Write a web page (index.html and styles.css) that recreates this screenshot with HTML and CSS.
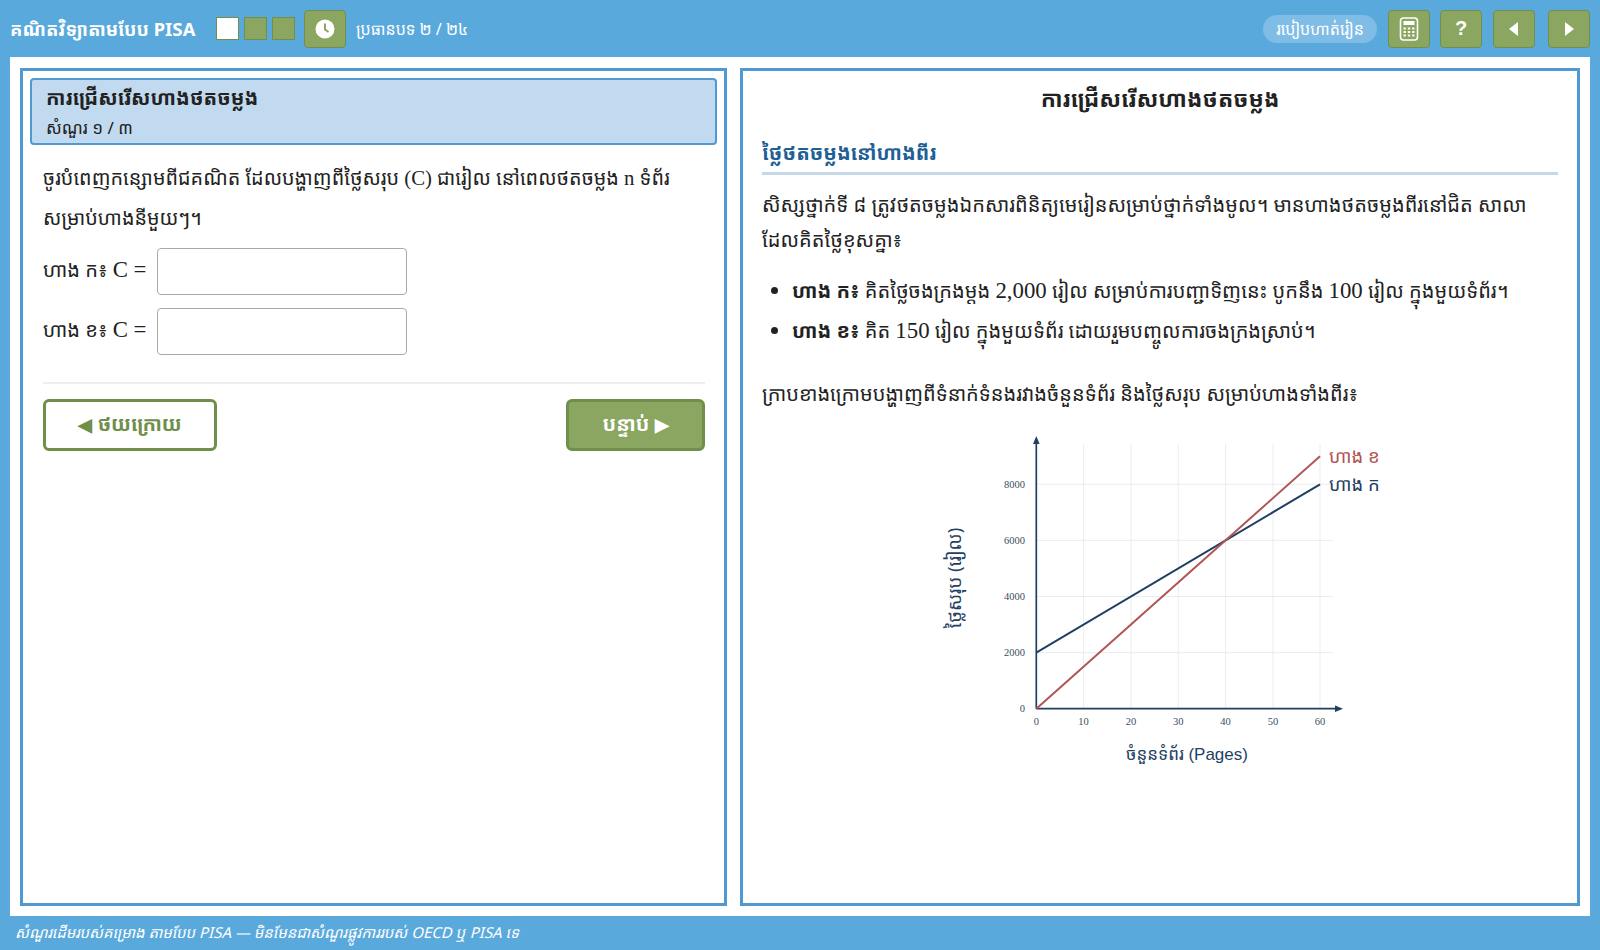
FILE: index.html
```html
<!DOCTYPE html>
<html lang="km">
<head>
<meta charset="utf-8">
<title>គណិតវិទ្យាតាមបែប PISA</title>
<link rel="stylesheet" href="styles.css">
</head>
<body>
<div class="app">
  <header class="topbar">
    <div class="brand">គណិតវិទ្យាតាមបែប PISA</div>
    <div class="steps">
      <span class="step step-on"></span>
      <span class="step"></span>
      <span class="step"></span>
    </div>
    <button class="tool tool-clock" aria-label="clock">
      <svg width="22" height="22" viewBox="0 0 22 22"><circle cx="11" cy="11" r="9.5" fill="#fff"/><path d="M11 5.5V11.5L14.5 14" fill="none" stroke="#8aa661" stroke-width="2"/></svg>
    </button>
    <div class="topic">ប្រធានបទ ២ / ២៤</div>
    <div class="spacer"></div>
    <div class="howto">របៀបហាត់រៀន</div>
    <button class="tool" aria-label="calculator">
      <svg width="20" height="26" viewBox="0 0 20 26"><rect x="1.5" y="2" width="17" height="22" rx="3" fill="none" stroke="#fff" stroke-width="1.6"/><rect x="4.5" y="5" width="11" height="4" fill="#fff"/><g fill="#fff"><rect x="4.5" y="11.5" width="2.4" height="2"/><rect x="8.8" y="11.5" width="2.4" height="2"/><rect x="13.1" y="11.5" width="2.4" height="2"/><rect x="4.5" y="15" width="2.4" height="2"/><rect x="8.8" y="15" width="2.4" height="2"/><rect x="13.1" y="15" width="2.4" height="2"/><rect x="4.5" y="18.5" width="2.4" height="2"/><rect x="8.8" y="18.5" width="2.4" height="2"/><rect x="13.1" y="18.5" width="2.4" height="2"/></g></svg>
    </button>
    <button class="tool tool-q" aria-label="help">?</button>
    <button class="tool tool-prev" aria-label="previous">
      <svg width="10" height="14" viewBox="0 0 10 14"><path d="M9 0V14L0 7Z" fill="#fff"/></svg>
    </button>
    <button class="tool tool-next" aria-label="next">
      <svg width="10" height="14" viewBox="0 0 10 14"><path d="M1 0V14L10 7Z" fill="#fff"/></svg>
    </button>
  </header>

  <main class="stage">
    <section class="panel panel-left">
      <div class="qhead">
        <div class="qtitle">ការជ្រើសរើសហាងថតចម្លង</div>
        <div class="qsub">សំណួរ ១ / ៣</div>
      </div>
      <div class="qbody">
        <p class="prompt">ចូរបំពេញកន្សោមពីជគណិត ដែលបង្ហាញពីថ្លៃសរុប <span class="lat lat-tight">(C)</span> ជារៀល នៅពេលថតចម្លង <span class="lat lat-tight">n</span> ទំព័រ សម្រាប់ហាងនីមួយៗ។</p>
        <div class="field"><label>ហាង ក៖ <span class="lat">C =</span></label><input type="text"></div>
        <div class="field"><label>ហាង ខ៖ <span class="lat">C =</span></label><input type="text"></div>
        <div class="actions">
          <button class="btn btn-back"><span class="arr">◀</span> ថយក្រោយ</button>
          <button class="btn btn-next">បន្ទាប់ <span class="arr">▶</span></button>
        </div>
      </div>
    </section>

    <section class="panel panel-right">
      <h1 class="title">ការជ្រើសរើសហាងថតចម្លង</h1>
      <h2 class="subtitle">ថ្លៃថតចម្លងនៅហាងពីរ</h2>
      <p class="para">សិស្សថ្នាក់ទី ៨ ត្រូវថតចម្លងឯកសារពិនិត្យមេរៀនសម្រាប់ថ្នាក់ទាំងមូល។ មានហាងថតចម្លងពីរនៅជិត សាលា ដែលគិតថ្លៃខុសគ្នា៖</p>
      <ul class="list">
        <li><b>ហាង ក៖</b> គិតថ្លៃចងក្រងម្តង <span class="lat">2,000</span> រៀល សម្រាប់ការបញ្ជាទិញនេះ បូកនឹង <span class="lat">100</span> រៀល ក្នុងមួយទំព័រ។</li>
        <li><b>ហាង ខ៖</b> គិត <span class="lat">150</span> រៀល ក្នុងមួយទំព័រ ដោយរួមបញ្ចូលការចងក្រងស្រាប់។</li>
      </ul>
      <p class="para para-chart">ក្រាបខាងក្រោមបង្ហាញពីទំនាក់ទំនងរវាងចំនួនទំព័រ និងថ្លៃសរុប សម្រាប់ហាងទាំងពីរ៖</p>
      <svg class="chart" width="480" height="360" viewBox="0 0 480 360">
        <g stroke="#e4e7ea" stroke-width="0.8" fill="none">
          <path d="M163.6 24V288.7M211 24V288.7M258.3 24V288.7M305.6 24V288.7M353 24V288.7M400 24V288.7"/>
          <path d="M116.3 64.3H413M116.3 120.4H413M116.3 176.5H413M116.3 232.6H413"/>
        </g>
        <path d="M116.3 288.7H418M116.3 288.7V22" fill="none" stroke="#1f3f63" stroke-width="1.7"/>
        <path d="M116.3 16L119.6 24H113Z" fill="#1f3f63"/>
        <path d="M423 288.7L415 285.5V292Z" fill="#1f3f63"/>
        <path d="M116.3 232.7L400 64.3" fill="none" stroke="#1f3f63" stroke-width="2"/>
        <path d="M116.3 288.7L400 36.3" fill="none" stroke="#b05555" stroke-width="2"/>
        <g class="tick tick-y">
          <text x="105" y="67.5">8000</text><text x="105" y="123.5">6000</text><text x="105" y="179.5">4000</text><text x="105" y="235.5">2000</text><text x="105" y="292">0</text>
        </g>
        <g class="tick tick-x">
          <text x="116.3" y="304.5">0</text><text x="163.6" y="304.5">10</text><text x="211" y="304.5">20</text><text x="258.3" y="304.5">30</text><text x="305.6" y="304.5">40</text><text x="353" y="304.5">50</text><text x="400" y="304.5">60</text>
        </g>
        <text class="lab lab-red" x="409" y="43">ហាង ខ</text>
        <text class="lab lab-blue" x="409" y="71">ហាង ក</text>
        <text class="axis-x" x="267" y="340">ចំនួនទំព័រ <tspan class="axis-lat">(Pages)</tspan></text>
        <text class="axis-y" transform="translate(41 158) rotate(-90)">ថ្លៃសរុប (រៀល)</text>
      </svg>
    </section>
  </main>

  <footer class="foot">សំណួរដើមរបស់គម្រោង តាមបែប PISA — មិនមែនជាសំណួរផ្លូវការរបស់ OECD ឬ PISA ទេ</footer>
</div>
</body>
</html>
```
FILE: styles.css
```css
* { box-sizing: border-box; }
html, body { margin: 0; height: 100%; }
body {
  font-family: "Noto Sans Khmer", "Noto Sans", "Liberation Sans", sans-serif;
  color: #222;
  background: #5aa9dd;
}
.app { width: 1600px; height: 950px; display: flex; flex-direction: column; }
.lat { font-family: "Liberation Serif", serif; font-size: 1.14em; }
.lat-tight { font-size: 1.05em; }

.topbar {
  height: 57px;
  display: flex;
  align-items: center;
  padding: 0 10px;
  color: #fff;
}
.brand { font-size: 18.3px; font-weight: 700; width: 206px; white-space: nowrap; }
.steps { display: flex; gap: 5px; width: 88px; }
.step { width: 23px; height: 23px; background: #8aa661; border: 1px solid #6f8f4a; }
.step-on { background: #fff; }
.tool {
  width: 42px; height: 38px; padding: 0;
  display: flex; align-items: center; justify-content: center;
  background: #8aa661; border: 1px solid #6f8f4a; border-radius: 4px;
  color: #fff; font: 700 20px "Liberation Sans", sans-serif;
}
.topic { margin-left: 10px; font-size: 16px; }
.spacer { flex: 1; }
.howto {
  width: 114px; height: 28px; margin-right: 11px;
  border-radius: 14px; background: #7fbce6;
  display: flex; align-items: center; justify-content: center;
  font-size: 16px; white-space: nowrap;
}
.tool-q { margin-left: 10px; }
.tool-prev { margin-left: 11px; }
.tool-next { margin-left: 13px; }

.stage {
  height: 859px;
  margin: 0 10px;
  background: #fff;
  display: flex;
  gap: 13px;
  padding: 11px 10px 10px;
}
.panel { border: 3px solid #4f9ad0; background: #fff; }
.panel-left { width: 707px; padding: 7px; }
.panel-right { flex: 1; padding: 0 19px; }

.qhead {
  height: 67px;
  background: #c1daf0;
  border: 2px solid #4f9ad0;
  border-radius: 4px;
  padding: 2px 14px;
}
.qtitle { font-size: 20px; font-weight: 700; line-height: 32px; }
.qsub { font-size: 17px; line-height: 27px; }
.qbody { padding: 13px 12px 14px 13px; }
.prompt { margin: 0; font-size: 19.8px; line-height: 40px; }
.field { display: flex; align-items: center; gap: 12px; margin-top: 13px; }
.prompt + .field { margin-top: 10px; }
.field label { font-size: 20px; width: 102px; white-space: nowrap; padding-bottom: 4px; }
.field input { width: 250px; height: 47px; border: 1px solid #aaa; border-radius: 4px; background: #fff; }
.actions {
  display: flex; justify-content: space-between;
  margin-top: 27px; padding-top: 15px;
  border-top: 2px solid #eee;
}
.btn {
  height: 52px; padding: 0 0 3px; border: 3px solid #6f8f4a; border-radius: 6px;
  font-family: inherit; font-size: 20px; font-weight: 700;
}
.arr { font-size: 0.9em; }
.btn-back { width: 174px; background: #fff; color: #6f8f4a; }
.btn-next { width: 139px; background: #8aa661; color: #fff; }

.title { margin: 9px 0 0; text-align: center; font-size: 22.5px; line-height: 38px; font-weight: 700; }
.subtitle {
  margin: 19px 0 0; padding-bottom: 3px;
  font-size: 20px; line-height: 32px; font-weight: 700; color: #1f5f96;
  border-bottom: 3px solid #c5d8ea;
}
.para { margin: 12px 0 0; font-size: 20px; line-height: 35px; }
.list { margin: 16px 0 0; padding: 0 0 0 30px; font-size: 20px; line-height: 36px; }
.list li { margin-bottom: 4px; }
.para-chart { margin-top: 27px; }
.chart { display: block; margin: 9px auto 0; }

.tick text { font: 10.5px "Liberation Serif", serif; fill: #3d4d5d; }
.tick-y text { text-anchor: end; }
.tick-x text { text-anchor: middle; }
.lab { font-size: 18.5px; }
.lab-red { fill: #b05555; }
.lab-blue { fill: #1f3f63; }
.axis-x { font-size: 17px; fill: #1f3f63; text-anchor: middle; }
.axis-lat { font-family: "Liberation Sans", sans-serif; }
.axis-y { font-size: 18.5px; fill: #1f3f63; text-anchor: middle; }

.foot {
  flex: 1; display: flex; align-items: center; padding: 0 15px 3px;
  color: #fff; font-size: 15px; font-style: italic;
}
```
